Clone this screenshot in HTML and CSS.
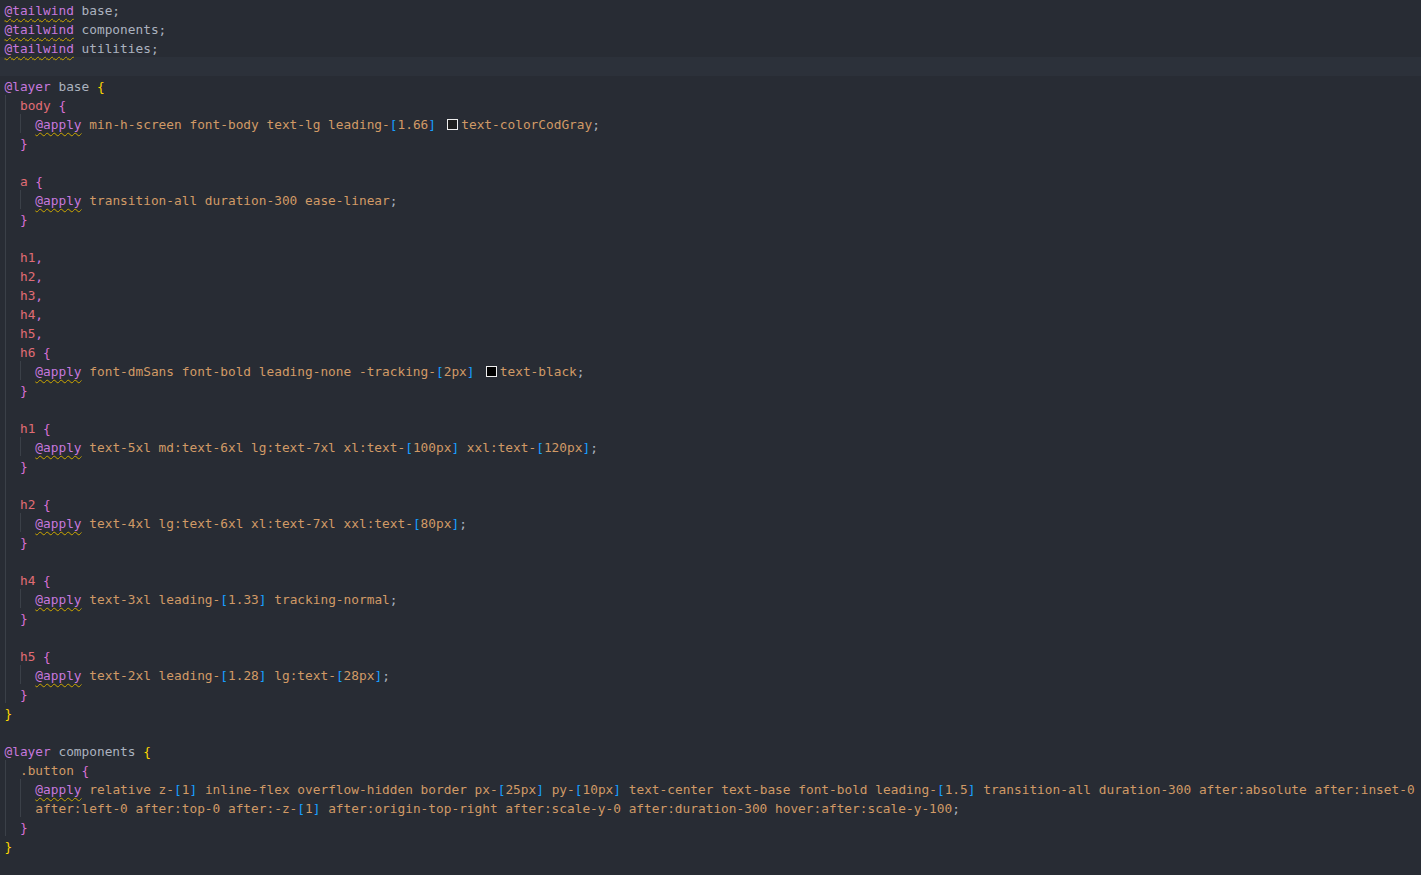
FILE: index.html
```html
<!DOCTYPE html>
<html lang="en">
<head>
<meta charset="utf-8">
<title>app.css</title>
<link rel="stylesheet" href="styles.css">
</head>
<body>
<div class="editor">
<div class="ln"><span class="k sq">@tailwind</span><span class="p"> base;</span></div>
<div class="ln"><span class="k sq">@tailwind</span><span class="p"> components;</span></div>
<div class="ln"><span class="k sq">@tailwind</span><span class="p"> utilities;</span></div>
<div class="ln cur"></div>
<div class="ln"><span class="k">@layer</span><span class="p"> base </span><span class="b1">{</span></div>
<div class="ln"><span class="g">  </span><span class="s">body</span><span class="p"> </span><span class="b2">{</span></div>
<div class="ln"><span class="g">  </span><span class="g">  </span><span class="k sq">@apply</span><span class="c"> min-h-screen font-body text-lg leading-</span><span class="b3">[</span><span class="c">1.66</span><span class="b3">]</span><span class="c"> </span><span class="sw sw-cod"></span><span class="c">text-colorCodGray</span><span class="p">;</span></div>
<div class="ln"><span class="g">  </span><span class="b2">}</span></div>
<div class="ln"><span class="g">  </span></div>
<div class="ln"><span class="g">  </span><span class="s">a</span><span class="p"> </span><span class="b2">{</span></div>
<div class="ln"><span class="g">  </span><span class="g">  </span><span class="k sq">@apply</span><span class="c"> transition-all duration-300 ease-linear</span><span class="p">;</span></div>
<div class="ln"><span class="g">  </span><span class="b2">}</span></div>
<div class="ln"><span class="g">  </span></div>
<div class="ln"><span class="g">  </span><span class="s">h1</span><span class="cm">,</span></div>
<div class="ln"><span class="g">  </span><span class="s">h2</span><span class="cm">,</span></div>
<div class="ln"><span class="g">  </span><span class="s">h3</span><span class="cm">,</span></div>
<div class="ln"><span class="g">  </span><span class="s">h4</span><span class="cm">,</span></div>
<div class="ln"><span class="g">  </span><span class="s">h5</span><span class="cm">,</span></div>
<div class="ln"><span class="g">  </span><span class="s">h6</span><span class="p"> </span><span class="b2">{</span></div>
<div class="ln"><span class="g">  </span><span class="g">  </span><span class="k sq">@apply</span><span class="c"> font-dmSans font-bold leading-none -tracking-</span><span class="b3">[</span><span class="c">2px</span><span class="b3">]</span><span class="c"> </span><span class="sw sw-black"></span><span class="c">text-black</span><span class="p">;</span></div>
<div class="ln"><span class="g">  </span><span class="b2">}</span></div>
<div class="ln"><span class="g">  </span></div>
<div class="ln"><span class="g">  </span><span class="s">h1</span><span class="p"> </span><span class="b2">{</span></div>
<div class="ln"><span class="g">  </span><span class="g">  </span><span class="k sq">@apply</span><span class="c"> text-5xl md:text-6xl lg:text-7xl xl:text-</span><span class="b3">[</span><span class="c">100px</span><span class="b3">]</span><span class="c"> xxl:text-</span><span class="b3">[</span><span class="c">120px</span><span class="b3">]</span><span class="p">;</span></div>
<div class="ln"><span class="g">  </span><span class="b2">}</span></div>
<div class="ln"><span class="g">  </span></div>
<div class="ln"><span class="g">  </span><span class="s">h2</span><span class="p"> </span><span class="b2">{</span></div>
<div class="ln"><span class="g">  </span><span class="g">  </span><span class="k sq">@apply</span><span class="c"> text-4xl lg:text-6xl xl:text-7xl xxl:text-</span><span class="b3">[</span><span class="c">80px</span><span class="b3">]</span><span class="p">;</span></div>
<div class="ln"><span class="g">  </span><span class="b2">}</span></div>
<div class="ln"><span class="g">  </span></div>
<div class="ln"><span class="g">  </span><span class="s">h4</span><span class="p"> </span><span class="b2">{</span></div>
<div class="ln"><span class="g">  </span><span class="g">  </span><span class="k sq">@apply</span><span class="c"> text-3xl leading-</span><span class="b3">[</span><span class="c">1.33</span><span class="b3">]</span><span class="c"> tracking-normal</span><span class="p">;</span></div>
<div class="ln"><span class="g">  </span><span class="b2">}</span></div>
<div class="ln"><span class="g">  </span></div>
<div class="ln"><span class="g">  </span><span class="s">h5</span><span class="p"> </span><span class="b2">{</span></div>
<div class="ln"><span class="g">  </span><span class="g">  </span><span class="k sq">@apply</span><span class="c"> text-2xl leading-</span><span class="b3">[</span><span class="c">1.28</span><span class="b3">]</span><span class="c"> lg:text-</span><span class="b3">[</span><span class="c">28px</span><span class="b3">]</span><span class="p">;</span></div>
<div class="ln"><span class="g">  </span><span class="b2">}</span></div>
<div class="ln"><span class="b1">}</span></div>
<div class="ln"></div>
<div class="ln"><span class="k">@layer</span><span class="p"> components </span><span class="b1">{</span></div>
<div class="ln"><span class="g">  </span><span class="c">.button</span><span class="p"> </span><span class="b2">{</span></div>
<div class="ln"><span class="g">  </span><span class="g">  </span><span class="k sq">@apply</span><span class="c"> relative z-</span><span class="b3">[</span><span class="c">1</span><span class="b3">]</span><span class="c"> inline-flex overflow-hidden border px-</span><span class="b3">[</span><span class="c">25px</span><span class="b3">]</span><span class="c"> py-</span><span class="b3">[</span><span class="c">10px</span><span class="b3">]</span><span class="c"> text-center text-base font-bold leading-</span><span class="b3">[</span><span class="c">1.5</span><span class="b3">]</span><span class="c"> transition-all duration-300 after:absolute after:inset-0</span></div>
<div class="ln"><span class="g">  </span><span class="g">  </span><span class="c">after:left-0 after:top-0 after:-z-</span><span class="b3">[</span><span class="c">1</span><span class="b3">]</span><span class="c"> after:origin-top-right after:scale-y-0 after:duration-300 hover:after:scale-y-100</span><span class="p">;</span></div>
<div class="ln"><span class="g">  </span><span class="b2">}</span></div>
<div class="ln"><span class="b1">}</span></div>
</div>
</body>
</html>
```

FILE: styles.css
```css
html, body {
  margin: 0;
  padding: 0;
  background: #282c34;
}

body {
  width: 1421px;
  height: 875px;
  overflow: hidden;
}

.editor {
  font-family: "DejaVu Sans Mono", "Liberation Mono", monospace;
  font-size: 12.8px;
  line-height: 21px;
  color: #abb2bf;
}

.ln {
  height: 19px;
  padding-left: 4.5px;
  white-space: pre;
}

.ln.cur {
  background: #2c313a;
}

.g {
  display: inline-block;
  height: 19px;
  vertical-align: top;
  box-shadow: inset 1px 0 0 #3b4048;
}

.k { color: #c678dd; }
.p { color: #abb2bf; }
.s { color: #e06c75; }
.c { color: #d19a66; }
.cm { color: #c678dd; }
.b1 { color: #ffd700; }
.b2 { color: #da70d6; }
.b3 { color: #179fff; }

.sq {
  text-decoration: underline wavy #cca700;
  text-decoration-thickness: 1px;
  text-underline-offset: 3px;
}

.sw {
  display: inline-block;
  width: 9px;
  height: 9px;
  border: 1px solid #eeeeee;
  margin: 0 3px 0 3.5px;
  vertical-align: -1px;
}

.sw-cod { background: #1e1e1e; }
.sw-black { background: #000000; }
```
